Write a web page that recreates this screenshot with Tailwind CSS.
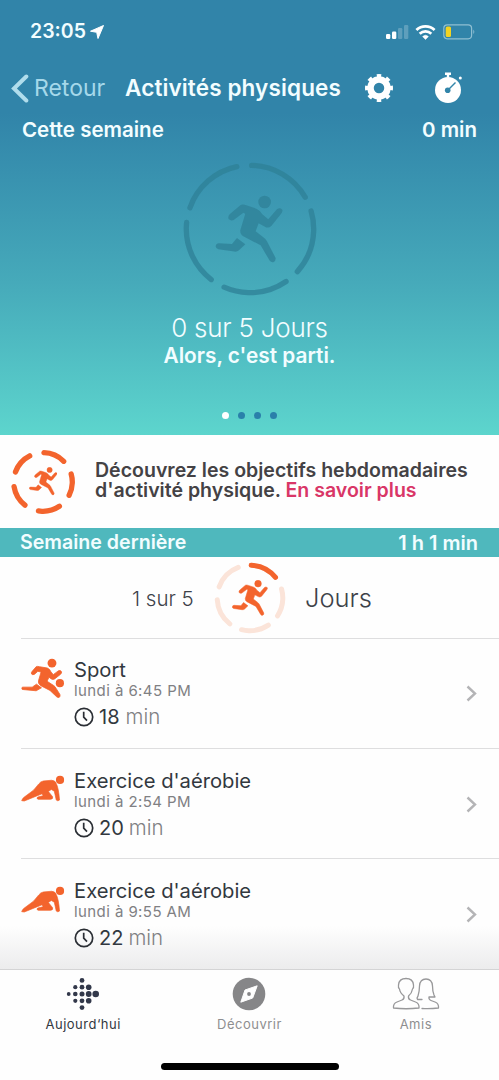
<!DOCTYPE html>
<html lang="fr">
<head>
<meta charset="utf-8">
<title>Activités physiques</title>
<script src="https://cdn.jsdelivr.net/npm/@tailwindcss/browser@4"></script>
</head>
<body class="w-[499px] h-[1080px] overflow-hidden bg-[#fefefe] font-['Inter',sans-serif] text-[#32383f]">
<svg class="hidden">
  <symbol id="runner" viewBox="198 134 206 206">
    <circle cx="347" cy="155" r="19"/>
    <path d="M275 164Q283 161 292 165L322 175Q334 180 340 192L358 207L384 177Q393 170 400 178Q402 184 396 191L367 227Q358 235 348 229L329 219L320 243L343 261Q350 266 354 273L380 323Q381 333 373 336Q366 337 362 331L335 285L283 258Q273 252 274 240L289 190L283 187L254 209Q245 213 239 206Q236 199 242 192Z"/>
    <path d="M264 263L289 282L270 300Q264 305 256 304L208 297Q200 294 200 288Q201 279 210 279L249 281Z"/>
  </symbol>
  <symbol id="sport" viewBox="62 54 132 122">
    <circle cx="156" cy="69" r="13.500"/>
    <circle cx="180" cy="130" r="12.500"/>
    <g stroke="#f3642d" stroke-width="2.500" stroke-linejoin="round"><path d="M108 80Q112 78 118 80L142 84Q150 87 153 96L160 104L176 92Q182 90 185 95Q186 99 182 103L164 117Q159 120 154 117L147 112L141 124L161 137Q166 140 168 145L180 164Q182 170 178 173Q173 174 170 171L150 152L121 137Q113 131 115 123L123 96L113 94L103 103Q97 106 94 102Q92 98 96 94Z"/>
    <path d="M109 133L124 144L108 153L66 149Q63 146 66 142L96 142Z"/></g>
  </symbol>
  <symbol id="aero" viewBox="62 76 132 82">
    <circle cx="180.500" cy="91" r="12.500"/>
    <path stroke="#f3642d" stroke-width="2" stroke-linejoin="round" d="M64 154Q66 147 72 143L100 122L116 103Q121 96 130 94L155 92Q167 93 169 102Q176 115 179 152Q174 157 169 152L163 125L154 120L145 126L158 142Q160 149 152 150L114 150Q107 147 113 143L129 139L126 133L104 142L72 155Z"/>
  </symbol>
  <symbol id="clock" viewBox="0 0 20 20">
    <circle cx="10" cy="10" r="8.700" fill="none" stroke="#2a2e34" stroke-width="1.700"/>
    <path d="M9.700 4.800V10.200L13 13.600" fill="none" stroke="#2a2e34" stroke-width="1.700"/>
  </symbol>
  <symbol id="chev" viewBox="0 0 11 17">
    <path d="M1.500 1.500L9 8.500L1.500 15.500" fill="none" stroke="#b4b4b6" stroke-width="2.400"/>
  </symbol>
</svg>

<header class="h-[435px] bg-linear-to-b from-[#3184a9] from-[26%] via-[#46aaba] via-[65%] to-[#5dd5cd] to-[100%] text-[#f2fdff] flex flex-col">
  <div class="h-[64px] pl-[30px] pr-[23px] flex items-center">
    <span class="text-[19.5px] font-semibold">23:05</span>
    <svg class="ml-1 mb-px" width="14" height="14" viewBox="0 0 14 14"><path d="M13.500 .5L8 13.500L6.700 7.300L.5 6.200Z" fill="#fff" stroke="#fff" stroke-width="1" stroke-linejoin="round"/></svg>
    <div class="ml-auto flex items-center">
      <svg width="23" height="16" viewBox="0 0 23 16" fill="#fff"><rect x="0" y="10" width="4.300" height="5" rx="1.200"/><rect x="6" y="7.500" width="4.300" height="7.500" rx="1.200"/><g opacity=".22"><rect x="12" y="4" width="4.300" height="11" rx="1.200"/><rect x="18" y="1" width="4.300" height="14" rx="1.200"/></g></svg>
      <svg class="ml-[6px]" width="21" height="17" viewBox="0 0 21 17" fill="none" stroke="#fff" stroke-width="2.700"><path d="M1.400 6A13 13 0 0 1 19.600 6"/><path d="M4.700 9.700A8.300 8.300 0 0 1 16.300 9.700"/><path d="M10.500 15.500L7.600 12.600A4.200 4.200 0 0 1 13.400 12.600Z" fill="#fff" stroke-width=".5"/></svg>
      <svg class="ml-[7px]" width="33" height="16" viewBox="0 0 33 16"><rect x=".8" y=".8" width="27.800" height="14" rx="3.500" fill="none" stroke="#8fbfd2" stroke-width="1.200"/><rect x="2.700" y="2.600" width="5.300" height="10.400" rx="1.500" fill="#f3d321"/><path d="M30.300 5.500Q32.300 7.800 30.300 10Z" fill="#8fbfd2"/></svg>
    </div>
  </div>
  <div class="h-[48px] pl-[11px] flex items-center text-[22.5px]">
    <svg width="18" height="29" viewBox="0 0 18 29"><path d="M15.300 2.500L3 14.500L15.300 26.500" fill="none" stroke="#b0ddec" stroke-width="4" stroke-linecap="round"/></svg>
    <span class="ml-[5px] w-[91px] text-[#a5d8ea] text-[23px]">Retour</span>
    <h1 class="w-[239px] text-[#f2fdff] font-semibold tracking-[0.13px] whitespace-nowrap">Activités physiques</h1>
    <svg width="30" height="30" viewBox="-15 -15 30 30"><g fill="none" stroke="#fff"><circle r="8.500" stroke-width="6.500"/><circle r="12.200" stroke-width="3.600" pathLength="96" stroke-dasharray="5.500 6.500" stroke-dashoffset="2.750"/></g></svg>
    <svg class="ml-[39px] -mt-px" width="30" height="32" viewBox="0 0 30 32"><circle cx="15" cy="18" r="13" fill="#fff"/><path d="M12 1.800H18M15 2V5.500" stroke="#fff" stroke-width="2.400"/><circle cx="27.300" cy="6" r="1.500" fill="#fff"/><path d="M14.500 18.500L22.500 10.500" stroke="#3285aa" stroke-width="1.400"/><circle cx="14.700" cy="18.200" r="2.800" fill="#3285aa"/></svg>
  </div>
  <div class="h-[36px] pl-[22px] pr-[22px] flex items-center justify-between text-[20.500px] font-semibold">
    <span>Cette semaine</span><span>0 min</span>
  </div>
  <div class="mt-[14px] self-center w-[134px] h-[134px] grid place-items-center opacity-90">
    <svg class="col-start-1 row-start-1" width="134" height="134" viewBox="-67 -67 134 134"><circle r="63.700" fill="none" stroke="#2f8198" stroke-opacity=".85" stroke-width="5.300" stroke-linecap="round" pathLength="360" stroke-dasharray="58.500 13.500" transform="rotate(-88.500)"/></svg>
    <svg class="col-start-1 row-start-1 fill-[#2f8198]/85" width="68.600" height="68.600"><use href="#runner"/></svg>
  </div>
  <p class="mt-[16px] h-[32px] leading-[32px] text-center text-[26px] tracking-[-0.25px] font-light">0 sur 5 Jours</p>
  <p class="h-[24px] leading-[24px] text-center text-[20.8px] font-semibold">Alors, c'est parti.</p>
  <div class="mt-[43.500px] flex justify-center gap-[9px]">
    <i class="size-[7px] rounded-full bg-white"></i><i class="size-[7px] rounded-full bg-[#2a80aa]"></i><i class="size-[7px] rounded-full bg-[#2a80aa]"></i><i class="size-[7px] rounded-full bg-[#2a80aa]"></i>
  </div>
</header>

<section class="h-[93px] pl-[10px] flex items-center bg-[#fefefe]">
  <div class="w-[85px] h-[66px] grid grid-cols-[66px] place-items-center">
    <svg class="col-start-1 row-start-1" width="66" height="66" viewBox="-33 -33 66 66"><circle r="29.300" fill="none" stroke="#f3642d" stroke-width="5.300" stroke-linecap="round" pathLength="360" stroke-dasharray="43 29" transform="rotate(-88)"/></svg>
    <svg class="col-start-1 row-start-1 fill-[#f3642d] stroke-[#f3642d] stroke-[3px]" width="28.500" height="28.500"><use href="#runner"/></svg>
  </div>
  <p class="text-[19.55px] leading-[20px] font-semibold text-[#444245] whitespace-nowrap mt-[-4px]">Découvrez les objectifs hebdomadaires<br>d'activité physique. <a class="text-[#d93667]">En savoir plus</a></p>
</section>

<div class="h-[29px] pl-[20px] pr-[21px] flex items-center justify-between bg-[#4fb8bd] text-[#f2fdff] text-[20px] font-semibold">
  <span class="text-[19.6px]">Semaine dernière</span><span>1 h 1 min</span>
</div>

<section class="h-[81px] pl-[132px] flex items-center">
  <span class="w-[82px] mt-[3px] text-[20.5px] font-light text-[#3d4249]">1 sur 5</span>
  <div class="w-[72px] h-[72px] grid place-items-center">
    <svg class="col-start-1 row-start-1" width="72" height="72" viewBox="-36 -36 72 72"><g fill="none" stroke-width="5" stroke-linecap="round" transform="rotate(-88)"><circle r="32.800" stroke="#fbe4d9" pathLength="360" stroke-dasharray="49 23"/><circle r="32.800" stroke="#f3642d" pathLength="360" stroke-dasharray="49 311"/></g></svg>
    <svg class="col-start-1 row-start-1 fill-[#f3642d] stroke-[#f3642d] stroke-[3px]" width="36" height="36"><use href="#runner"/></svg>
  </div>
  <span class="ml-[19px] mt-[2px] text-[25.5px] font-light text-[#3d4249]">Jours</span>
</section>

<main class="h-[331px] pl-[21px] bg-linear-to-b from-[#fefefe] from-[87%] to-[#ececed] flex flex-col">
  <article class="h-[110.200px] shrink-0 border-t border-[#dededf] flex">
    <svg class="mt-[19px] fill-[#f3642d]" width="43.500" height="40.500"><use href="#sport"/></svg>
    <div class="ml-[9.5px] mt-[19px] flex-1 whitespace-nowrap">
      <h2 class="h-[23px] leading-[23px] text-[20.2px]">Sport</h2>
      <p class="h-[20px] leading-[20px] text-[15px] tracking-[0.42px] text-[#808083]">lundi à 6:45 PM</p>
      <p class="h-[32px] flex items-center text-[20px] text-[#808083]"><svg width="20" height="20"><use href="#clock"/></svg><span class="ml-[5px] text-[#32383f]">18</span><span class="ml-[6px] text-[20.5px] font-light">min</span></p>
    </div>
    <svg class="mt-[46px] mr-[22px]" width="11" height="17"><use href="#chev"/></svg>
  </article>
  <article class="h-[110.200px] shrink-0 border-t border-[#dededf] flex">
    <svg class="mt-[26px] fill-[#f3642d]" width="43.500" height="27"><use href="#aero"/></svg>
    <div class="ml-[9.5px] mt-[20px] flex-1 whitespace-nowrap">
      <h2 class="h-[23px] leading-[23px] text-[20.2px]">Exercice d'aérobie</h2>
      <p class="h-[20px] leading-[20px] text-[15px] tracking-[0.42px] text-[#808083]">lundi à 2:54 PM</p>
      <p class="h-[32px] flex items-center text-[20px] text-[#808083]"><svg width="20" height="20"><use href="#clock"/></svg><span class="ml-[5px] text-[#32383f]">20</span><span class="ml-[5px] text-[20.5px] font-light">min</span></p>
    </div>
    <svg class="mt-[47px] mr-[22px]" width="11" height="17"><use href="#chev"/></svg>
  </article>
  <article class="h-[110.200px] shrink-0 border-t border-[#dededf] flex">
    <svg class="mt-[27px] fill-[#f3642d]" width="43.500" height="27"><use href="#aero"/></svg>
    <div class="ml-[9.5px] mt-[20px] flex-1 whitespace-nowrap">
      <h2 class="h-[23px] leading-[23px] text-[20.2px]">Exercice d'aérobie</h2>
      <p class="h-[20px] leading-[20px] text-[15px] tracking-[0.42px] text-[#808083]">lundi à 9:55 AM</p>
      <p class="h-[32px] flex items-center text-[20px] text-[#808083]"><svg width="20" height="20"><use href="#clock"/></svg><span class="ml-[5px] text-[#32383f]">22</span><span class="ml-[5px] text-[20.5px] font-light">min</span></p>
    </div>
    <svg class="mt-[47px] mr-[22px]" width="11" height="17"><use href="#chev"/></svg>
  </article>
</main>

<nav class="h-[111px] bg-[#fefefe] border-t border-[#d4d4d5] flex flex-col">
  <div class="h-[93px] grid grid-cols-3 text-center text-[13px] tracking-[0.5px] text-[#8e8e90]">
    <div class="pt-[7px] flex flex-col items-center text-[#32383f]">
      <svg width="34" height="34" viewBox="-17 -17 34 34" fill="#32384a">
        <circle cx="-14.300" r="1.900"/><circle cx="-7.700" r="2.300"/><circle cx="-1" r="2.500"/><circle cx="5.700" r="2.900"/><circle cx="12.700" r="3.300"/>
        <circle cx="-7.700" cy="-6.800" r="2.100"/><circle cx="-1" cy="-6.800" r="2.400"/><circle cx="5.700" cy="-6.800" r="2.800"/>
        <circle cx="-7.700" cy="6.800" r="2.100"/><circle cx="-1" cy="6.800" r="2.400"/><circle cx="5.700" cy="6.800" r="2.800"/>
        <circle cx="-1" cy="-13.600" r="2.400"/><circle cx="-1" cy="13.600" r="2.400"/>
      </svg>
      <span class="mt-[4px]">Aujourd‘hui</span>
    </div>
    <div class="pt-[7px] flex flex-col items-center">
      <svg width="34" height="34" viewBox="-17 -17 34 34"><circle r="16.300" fill="#868688"/><path d="M8.200 -8.200L3.700 4L-8.200 8.200L-4 -4Z" fill="#fefefe" stroke="#fefefe" stroke-linejoin="round"/><circle r="1.900" fill="#868688"/></svg>
      <span class="mt-[4px]">Découvrir</span>
    </div>
    <div class="pt-[7px] flex flex-col items-center">
      <svg width="48" height="34" viewBox="0 0 48 34" fill="none" stroke="#98989a" stroke-width="1.300" stroke-linejoin="round" stroke-linecap="round">
        <path d="M1.500 31Q1 26.500 5 25L10 23Q12.500 22 12 19Q8 16 7.500 12Q6 11 6.500 8Q7 1.500 14 1.500Q21 1.500 21.500 8Q22 11 20.500 12Q20 16 16.500 19Q16 22 18.500 23L23.500 25Q27.500 26.500 27 31Q14 32.500 1.500 31Z"/>
        <path d="M30 22.500H25.500Q24.500 21 26 19Q27.500 14 27.500 9Q28 2 34 2Q40 2 40.500 9Q40.500 14 42 18L43 20H37Q36.500 22.500 39 23.500L43 25Q47 26.500 46.500 31Q38 32 30 31.500"/>
      </svg>
      <span class="mt-[4px]">Amis</span>
    </div>
  </div>
  <div class="self-center w-[178px] h-[7px] rounded-full bg-black"></div>
</nav>
</body>
</html>
